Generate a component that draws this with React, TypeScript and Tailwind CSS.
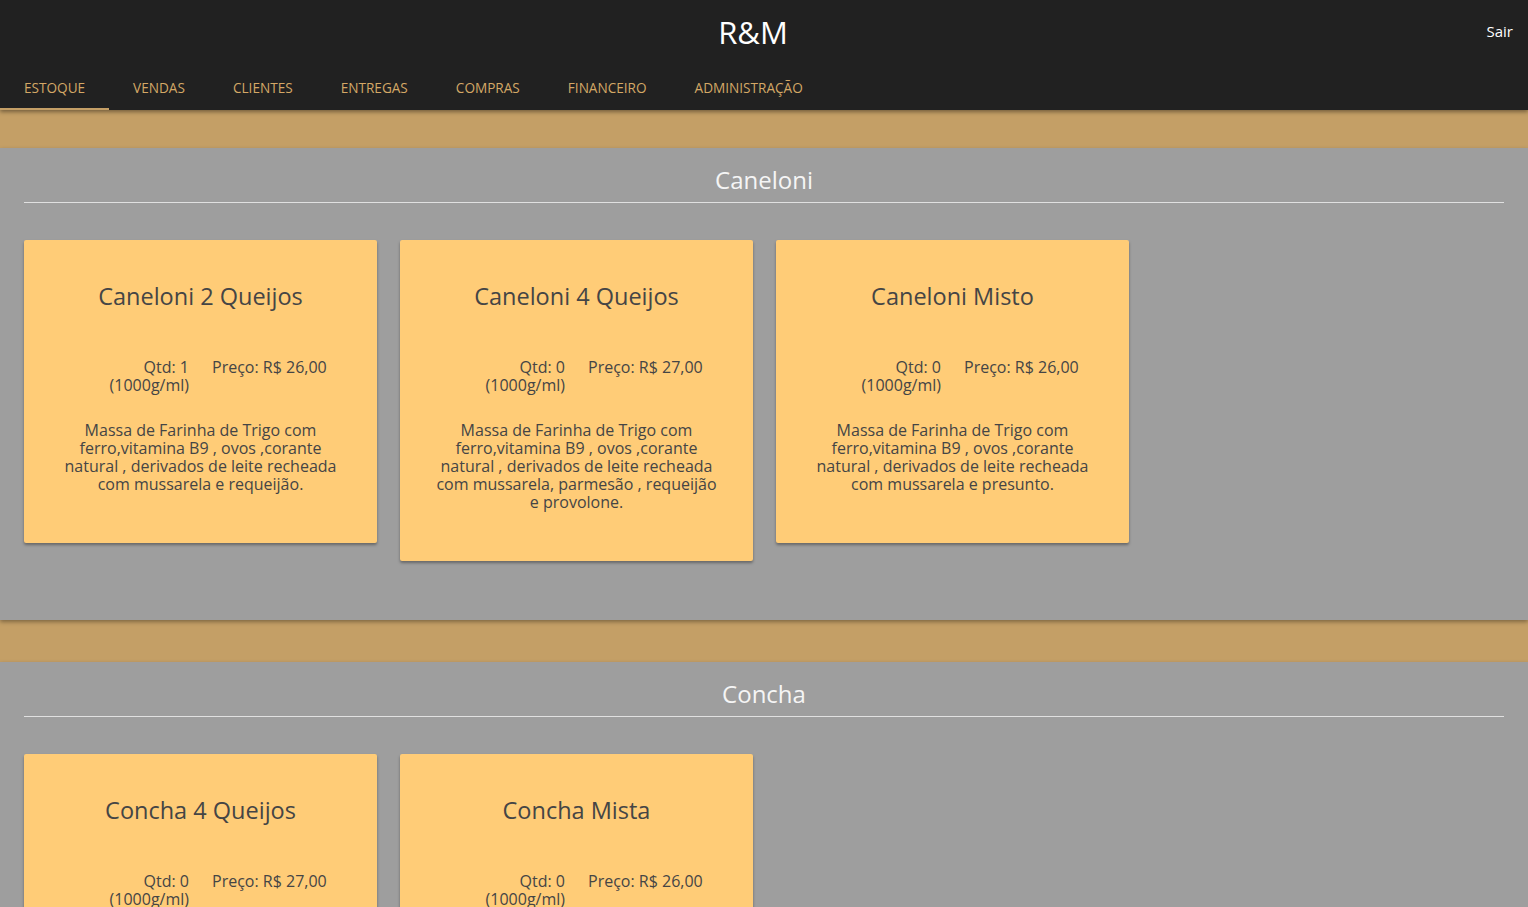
import { useState } from "react";

type Produto = {
  id: number;
  nome: string;
  qtd: number;
  preco: string;
  descricao: string[];
};

type Categoria = {
  nome: string;
  produtos: Produto[];
};

const abas = ["ESTOQUE", "VENDAS", "CLIENTES", "ENTREGAS", "COMPRAS", "FINANCEIRO", "ADMINISTRAÇÃO"];

const categorias: Categoria[] = [
  {
    nome: "Caneloni",
    produtos: [
      {
        id: 1,
        nome: "Caneloni 2 Queijos",
        qtd: 1,
        preco: "26,00",
        descricao: [
          "Massa de Farinha de Trigo com",
          "ferro,vitamina B9 , ovos ,corante",
          "natural , derivados de leite recheada",
          "com mussarela e requeijão.",
        ],
      },
      {
        id: 2,
        nome: "Caneloni 4 Queijos",
        qtd: 0,
        preco: "27,00",
        descricao: [
          "Massa de Farinha de Trigo com",
          "ferro,vitamina B9 , ovos ,corante",
          "natural , derivados de leite recheada",
          "com mussarela, parmesão , requeijão",
          "e provolone.",
        ],
      },
      {
        id: 3,
        nome: "Caneloni Misto",
        qtd: 0,
        preco: "26,00",
        descricao: [
          "Massa de Farinha de Trigo com",
          "ferro,vitamina B9 , ovos ,corante",
          "natural , derivados de leite recheada",
          "com mussarela e presunto.",
        ],
      },
    ],
  },
  {
    nome: "Concha",
    produtos: [
      {
        id: 4,
        nome: "Concha 4 Queijos",
        qtd: 0,
        preco: "27,00",
        descricao: [
          "Massa de Farinha de Trigo com",
          "ferro,vitamina B9 , ovos ,corante",
          "natural , derivados de leite recheada",
          "com mussarela, parmesão , requeijão",
          "e provolone.",
        ],
      },
      {
        id: 5,
        nome: "Concha Mista",
        qtd: 0,
        preco: "26,00",
        descricao: [
          "Massa de Farinha de Trigo com",
          "ferro,vitamina B9 , ovos ,corante",
          "natural , derivados de leite recheada",
          "com mussarela e presunto.",
        ],
      },
    ],
  },
];

const CardProduto = ({ produto }: { produto: Produto }) => {
  return (
    <div className="w-[353px] rounded-[2px] bg-[#ffcc77] px-[30px] pt-[40px] pb-[50px] text-center text-[#454545] shadow-[0_2px_3px_rgba(0,0,0,0.35)]">
      <h3 className="text-[23.5px] leading-[32px]">{produto.nome}</h3>
      {/* quantidade e preço */}
      <div className="mt-[46px] flex gap-[23px] text-[16px] leading-[18px]">
        <div className="flex-1 text-right">
          <p>Qtd: {produto.qtd}</p>
          <p>(1000g/ml)</p>
        </div>
        <div className="flex-1 text-left">
          <p>Preço: R$ {produto.preco}</p>
        </div>
      </div>
      <div className="mt-[27px] text-[16px] leading-[18px]">
        {produto.descricao.map((linha, i) => (
          <p key={i} className="whitespace-nowrap">{linha}</p>
        ))}
      </div>
    </div>
  );
};

export default function App() {
  const [abaAtiva, setAbaAtiva] = useState("ESTOQUE");

  return (
    <div className="min-h-screen bg-[#c49f66] font-['Open_Sans',sans-serif]">
      <header className="relative z-10 bg-[#212121] shadow-[0_2px_4px_rgba(0,0,0,0.4)]">
        <div className="relative flex h-[64px] items-center justify-center pr-[22px]">
          <h1 className="text-[31px] text-white">R&amp;M</h1>
          <button className="absolute right-[15px] top-[20px] text-[15px] text-white">Sair</button>
        </div>
        <nav className="flex h-[46px]">
          {abas.map((aba) => (
            <button
              key={aba}
              onClick={() => setAbaAtiva(aba)}
              className={`border-b-2 px-[24px] pt-[4px] text-[13.6px] text-[#d4a866] ${
                abaAtiva === aba ? "border-[#c49f66]" : "border-transparent"
              }`}
            >
              {aba}
            </button>
          ))}
        </nav>
      </header>

      {categorias.map((categoria, idx) => (
        <section
          key={categoria.nome}
          className={`${idx === 0 ? "mt-[38px]" : "mt-[42px]"} bg-[#9e9e9e] px-[24px] pb-[59px] shadow-[0_2px_4px_rgba(0,0,0,0.35)]`}
        >
          <h2 className="pt-[15px] pb-[5px] text-center text-[24px] leading-[34px] text-[#f5f5f5]">{categoria.nome}</h2>
          <hr className="border-t border-[#e0e0e0]" />
          <div className="mt-[37px] flex flex-wrap items-start gap-[23px]">
            {categoria.produtos.map((produto) => (
              <CardProduto key={produto.id} produto={produto} />
            ))}
          </div>
        </section>
      ))}
    </div>
  );
}
